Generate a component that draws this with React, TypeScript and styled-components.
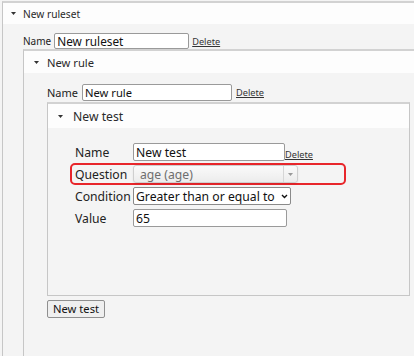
import React from "react";
import styled, { createGlobalStyle } from "styled-components";

const GlobalStyle = createGlobalStyle`
  html, body {
    margin: 0;
    padding: 0;
    overflow: hidden;
    background: #f4f4f4;
  }
  body {
    font-family: "Noto Sans", "Open Sans", sans-serif;
    color: #222;
  }
`;

// per nesting level: ruleset, rule, test
const headerFont = [10.2, 11.2, 12.2];
const headerHeight = [21, 22, 24];
const headerPad = [8, 10, 10];
const caretGap = [7, 8, 10];
const bodyPad = ["9px 0 0 20px", "11px 0 60px 23px", "13px 0 66px 22px"];
const labelFont = [10, 11, 12.2];
const inputFont = [11.8, 11.2, 12.2];
const inputHeight = [16, 17, 18];

const Page = styled.div`
  width: 470px;
  padding: 1px 0 0 2px;
`;

const Panel = styled.section<{ $level: number }>`
  border-top: 2px solid #d2d2d2;
  border-left: 1px solid #c6c6c6;
  border-right: 1px solid #c6c6c6;
  border-bottom: 1px solid #c6c6c6;
  background: #f4f4f4;
  margin-right: 20px;
`;

const Header = styled.div<{ $level: number }>`
  display: flex;
  align-items: center;
  gap: ${(p) => caretGap[p.$level]}px;
  height: ${(p) => headerHeight[p.$level]}px;
  padding-left: ${(p) => headerPad[p.$level]}px;
  background: #fdfdfd;
  font-size: ${(p) => headerFont[p.$level]}px;
  color: #2a2a2a;
`;

const Body = styled.div<{ $level: number }>`
  padding: ${(p) => bodyPad[p.$level]};
`;

const NameRow = styled.div<{ $level: number }>`
  display: flex;
  align-items: center;
  gap: ${(p) => (p.$level === 0 ? 3 : 4)}px;
  font-size: ${(p) => labelFont[p.$level]}px;
  margin-bottom: ${(p) => (p.$level === 0 ? 0 : 1)}px;
`;

const TextInput = styled.input<{ $level: number; $width: number }>`
  box-sizing: border-box;
  width: ${(p) => p.$width}px;
  height: ${(p) => inputHeight[p.$level]}px;
  padding: 0 2px;
  border: 1px solid #9a9a9a;
  border-radius: 2px;
  background: #fff;
  font-family: inherit;
  font-size: ${(p) => inputFont[p.$level]}px;
  color: #111;
  outline: none;
`;

const DeleteLink = styled.a<{ $bottom?: boolean }>`
  font-size: 9.2px;
  color: #333;
  text-decoration: underline;
  align-self: ${(p) => (p.$bottom ? "flex-end" : "center")};
  cursor: pointer;
`;

const Fields = styled.div`
  display: flex;
  flex-direction: column;
`;

const FieldRow = styled.div<{ $highlight?: boolean }>`
  box-sizing: border-box;
  display: flex;
  align-items: center;
  width: 276px;
  height: 22px;
  padding-left: 3px;
  border: 2px solid ${(p) => (p.$highlight ? "#e8262b" : "transparent")};
  border-radius: 5px;
  font-size: 12.2px;
`;

const FieldLabel = styled.span`
  width: 58px;
  flex-shrink: 0;
  color: #222;
`;

const ChosenSelect = styled.div`
  box-sizing: border-box;
  display: flex;
  align-items: center;
  width: 165px;
  height: 18px;
  border: 1px solid #cfcfcf;
  border-radius: 3px;
  background: linear-gradient(#fafafa, #ececec);
  box-shadow: 0 1px 2px rgba(0, 0, 0, 0.08);
  color: #6e6e6e;
  font-size: 12.2px;
`;

const ChosenText = styled.span`
  flex: 1;
  padding-left: 6px;
`;

const ChosenArrow = styled.span`
  display: flex;
  align-items: center;
  justify-content: center;
  width: 13px;
  height: 100%;
  border-left: 1px solid #d6d6d6;
`;

const NativeSelect = styled.div`
  box-sizing: border-box;
  display: flex;
  align-items: center;
  width: 158px;
  height: 18px;
  padding: 0 2px 0 2px;
  border: 1px solid #8a8a8a;
  border-radius: 2px;
  background: #fff;
  font-size: 12.2px;
  color: #111;
  white-space: nowrap;
`;

const SelectValue = styled.span`
  flex: 1;
  overflow: hidden;
`;

const AddButton = styled.button`
  margin-top: 1px;
  height: 18px;
  padding: 0 5px;
  border: 1px solid #8f8f8f;
  border-radius: 2px;
  background: #efefef;
  font-family: inherit;
  font-size: 11.2px;
  color: #111;
  line-height: 1;
`;

const Caret = () => (
  <svg width="5" height="3" viewBox="0 0 5 3">
    <polygon points="0,0 5,0 2.5,3" fill="#333" />
  </svg>
);

const TestPanel: React.FC = () => (
  <Panel $level={2}>
    <Header $level={2}>
      <Caret />
      New test
    </Header>
    <Body $level={2}>
      <Fields>
        <FieldRow>
          <FieldLabel>Name</FieldLabel>
          <TextInput $level={2} $width={152} defaultValue="New test" />
          <DeleteLink $bottom>Delete</DeleteLink>
        </FieldRow>
        <FieldRow $highlight>
          <FieldLabel>Question</FieldLabel>
          <ChosenSelect>
            <ChosenText>age (age)</ChosenText>
            <ChosenArrow>
              <svg width="5" height="3" viewBox="0 0 5 3">
                <polygon points="0,0 5,0 2.5,3" fill="#999" />
              </svg>
            </ChosenArrow>
          </ChosenSelect>
        </FieldRow>
        <FieldRow>
          <FieldLabel>Condition</FieldLabel>
          <NativeSelect>
            <SelectValue>Greater than or equal to</SelectValue>
            <svg width="7" height="5" viewBox="0 0 7 5">
              <polyline
                points="1,1 3.5,3.5 6,1"
                fill="none"
                stroke="#111"
                strokeWidth="1.4"
              />
            </svg>
          </NativeSelect>
        </FieldRow>
        <FieldRow>
          <FieldLabel>Value</FieldLabel>
          <TextInput $level={2} $width={154} defaultValue="65" />
        </FieldRow>
      </Fields>
    </Body>
  </Panel>
);

export default function App() {
  return (
    <Page>
      <GlobalStyle />
      <Panel $level={0}>
        <Header $level={0}>
          <Caret />
          New ruleset
        </Header>
        <Body $level={0}>
          <NameRow $level={0}>
            Name
            <TextInput $level={0} $width={135} defaultValue="New ruleset" />
            <DeleteLink>Delete</DeleteLink>
          </NameRow>
          <Panel $level={1}>
            <Header $level={1}>
              <Caret />
              New rule
            </Header>
            <Body $level={1}>
              <NameRow $level={1}>
                Name
                <TextInput $level={1} $width={150} defaultValue="New rule" />
                <DeleteLink>Delete</DeleteLink>
              </NameRow>
              <TestPanel />
              <AddButton>New test</AddButton>
            </Body>
          </Panel>
        </Body>
      </Panel>
    </Page>
  );
}
